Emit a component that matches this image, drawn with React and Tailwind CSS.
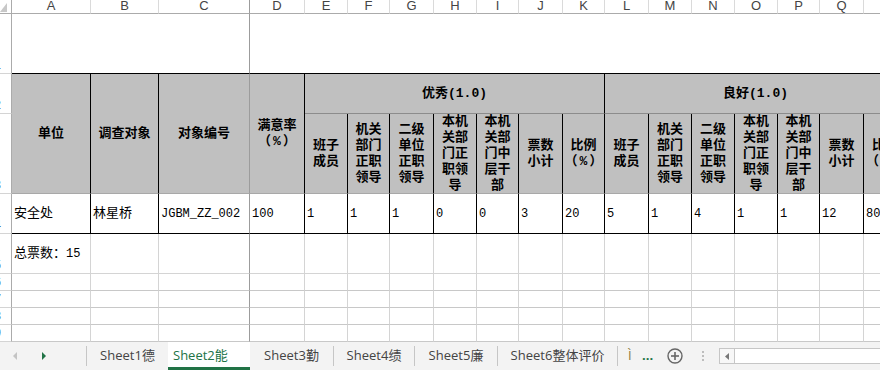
import React from 'react';

const LETTERS = ['A','B','C','D','E','F','G','H','I','J','K','L','M','N','O','P','Q','R'];

const SUB = [
  ['班子','成员'],
  ['机关','部门','正职','领导'],
  ['二级','单位','正职','领导'],
  ['本机','关部','门正','职领','导'],
  ['本机','关部','门中','层干','部'],
  ['票数','小计'],
  ['比例','（%）'],
];

const DATA = ['1','1','1','0','0','3','20','5','1','4','1','1','12','80'];

function RowHead({ n }) {
  return (
    <div className="border-r border-b border-r-[#ababab] border-b-[#d4d4d4] bg-white overflow-hidden flex items-end pb-[1px]">
      <div className="ml-[-14px] w-[23px] shrink-0 text-center text-[12px] leading-[14px] text-[#3b5c8f] font-['Liberation_Sans',sans-serif]">{n}</div>
    </div>
  );
}

export default function App() {
  return (
    <div className="w-[880px] h-[370px] overflow-hidden bg-white flex flex-col">
      <div className="grid grid-cols-[12px_79px_68px_91px_55px_43px_42px_44px_43px_42px_44px_42px_44px_43px_43px_43px_42px_44px_43px] grid-rows-[14px_60px_40px_80px_40px_40px_17px_17px_17px_17px] w-[907px] font-['Liberation_Mono','Noto_Sans_CJK_SC',monospace] text-[13px] text-black">
        {/* column header row */}
        <div className="border-r border-b border-r-[#ababab] border-b-[#ababab] bg-white relative overflow-hidden">
          <svg className="absolute left-0 top-[2px]" width="8" height="11" viewBox="0 0 8 11">
            <polygon points="7,1 7,10 0,10" fill="#c8c8c8" />
          </svg>
        </div>
        {LETTERS.map((l, i) => (
          <div
            key={l}
            className={
              i === 2
                ? "border-r border-b border-r-[#9c9c9c] border-b-[#ababab] overflow-hidden flex items-end justify-center pb-[1px]"
                : "border-r border-b border-r-[#dadada] border-b-[#ababab] overflow-hidden flex items-end justify-center pb-[1px]"
            }
          >
            <span className="font-['Liberation_Sans',sans-serif] text-[13px] leading-[13px] text-[#444]">{l}</span>
          </div>
        ))}

        {/* row 1 */}
        <RowHead n="1" />
        <div className="col-span-3 border-r border-b border-r-[#9c9c9c] border-b-black" />
        <div className="col-span-15 border-b border-b-black" />

        {/* rows 2-3 header */}
        <RowHead n="2" />
        <div className="row-span-2 bg-[#c0c0c0] border-r border-b border-r-black border-b-[#a8a8a8] flex items-center justify-center font-bold">单位</div>
        <div className="row-span-2 bg-[#c0c0c0] border-r border-b border-r-black border-b-[#a8a8a8] flex items-center justify-center font-bold">调查对象</div>
        <div className="row-span-2 bg-[#c0c0c0] border-r border-b border-r-[#9c9c9c] border-b-[#a8a8a8] flex items-center justify-center font-bold">对象编号</div>
        <div className="row-span-2 bg-[#c0c0c0] border-r border-b border-r-black border-b-[#a8a8a8] flex flex-col items-center justify-center font-bold leading-[16px]">
          <span>满意率</span>
          <span className="tracking-[2px] pl-[2px]">（%）</span>
        </div>
        <div className="col-span-7 bg-[#c0c0c0] border-r border-b border-r-black border-b-[#8c8c8c] flex items-center justify-center font-bold">优秀(1.0)</div>
        <div className="col-span-7 bg-[#c0c0c0] border-r border-b border-r-black border-b-[#8c8c8c] flex items-center justify-center font-bold">良好(1.0)</div>

        <RowHead n="3" />
        {[...SUB, ...SUB].map((lines, i) => (
          <div key={i} className="bg-[#c0c0c0] border-r border-b border-r-black border-b-[#a8a8a8] flex flex-col items-center justify-center font-bold leading-[16px] whitespace-nowrap">
            {lines.map((t, j) => (
              <span key={j} className={t === '（%）' ? "tracking-[2px] pl-[2px]" : ""}>{t}</span>
            ))}
          </div>
        ))}

        {/* row 4 data */}
        <RowHead n="4" />
        <div className="border-r border-b border-r-black border-b-black flex items-center pl-[2px]">安全处</div>
        <div className="border-r border-b border-r-black border-b-black flex items-center pl-[2px]">林星桥</div>
        <div className="border-r border-b border-r-[#9c9c9c] border-b-black flex items-center pl-[2px] text-[12px]">JGBM_ZZ_002</div>
        <div className="border-r border-b border-r-black border-b-black flex items-center pl-[2px] text-[12px]">100</div>
        {DATA.map((d, i) => (
          <div key={i} className="border-r border-b border-r-black border-b-black flex items-center pl-[2px] text-[12px]">{d}</div>
        ))}

        {/* row 5 */}
        <RowHead n="5" />
        <div className="border-r border-b border-r-[#d4d4d4] border-b-[#d4d4d4] flex items-center pl-[2px] whitespace-nowrap">总票数：<span className="text-[12px]">15</span></div>
        {LETTERS.slice(1).map((l, i) => (
          <div key={l} className={i === 1 ? "border-r border-b border-r-[#9c9c9c] border-b-[#d4d4d4]" : "border-r border-b border-r-[#d4d4d4] border-b-[#d4d4d4]"} />
        ))}

        {['6','7','8','9'].map((n) => (
          <React.Fragment key={n}>
            <RowHead n={n} />
            {LETTERS.map((l, i) => (
              <div key={l} className={i === 2 ? "border-r border-b border-r-[#9c9c9c] border-b-[#c8c8c8]" : "border-r border-b border-r-[#d4d4d4] border-b-[#c8c8c8]"} />
            ))}
          </React.Fragment>
        ))}
      </div>

      {/* sheet tab bar */}
      <div className="h-[28px] flex items-stretch bg-[#f3f3f3] font-['Open_Sans','Noto_Sans_CJK_SC',sans-serif] text-[13px] text-[#444] whitespace-nowrap">
        <div className="w-[86px] flex items-center shrink-0">
          <svg className="ml-[13px]" width="5" height="8" viewBox="0 0 5 8"><polygon points="4,0 4,8 0,4" fill="#c4c4c4" /></svg>
          <svg className="ml-[24px]" width="5" height="8" viewBox="0 0 5 8"><polygon points="0,0 0,8 4,4" fill="#217346" /></svg>
        </div>
        <div className="w-px bg-[#c6c6c6] my-[4px] shrink-0" />
        <div className="w-[81px] flex items-center justify-center shrink-0">Sheet1德</div>
        <div className="w-[82px] flex items-center justify-start pl-[5px] shrink-0 bg-white text-[#217346] border-b-[3px] border-b-[#217346] pt-[3px]">Sheet2能</div>
        <div className="w-[83px] flex items-center justify-center shrink-0">Sheet3勤</div>
        <div className="w-px bg-[#c6c6c6] my-[4px] shrink-0" />
        <div className="w-[80px] flex items-center justify-center shrink-0">Sheet4绩</div>
        <div className="w-px bg-[#c6c6c6] my-[4px] shrink-0" />
        <div className="w-[82px] flex items-center justify-center shrink-0">Sheet5廉</div>
        <div className="w-px bg-[#c6c6c6] my-[4px] shrink-0" />
        <div className="w-[119px] flex items-center justify-center shrink-0">Sheet6整体评价</div>
        <div className="w-px bg-[#c6c6c6] my-[4px] shrink-0" />
        <div className="w-[22px] flex items-center shrink-0 pl-[10px] text-[#8a7a40]">Ì</div>
        <div className="w-[27px] flex items-center shrink-0 pl-[2px] text-[#217346] font-bold">...</div>
        <div className="w-[27px] flex items-center shrink-0">
          <svg width="16" height="16" viewBox="0 0 16 16">
            <circle cx="8" cy="8" r="7" fill="none" stroke="#666" strokeWidth="1.4" />
            <line x1="8" y1="4" x2="8" y2="12" stroke="#666" strokeWidth="1.6" />
            <line x1="4" y1="8" x2="12" y2="8" stroke="#666" strokeWidth="1.6" />
          </svg>
        </div>
        <div className="w-[25px] flex flex-col items-start pl-[8px] justify-center gap-[2px] shrink-0">
          <div className="w-[2px] h-[2px] bg-[#bdbdbd]" />
          <div className="w-[2px] h-[2px] bg-[#bdbdbd]" />
          <div className="w-[2px] h-[2px] bg-[#bdbdbd]" />
        </div>
        <div className="flex-1 flex items-center">
          <div className="h-[16px] w-[16px] border border-[#c6c6c6] bg-[#f7f7f7] flex items-center justify-center shrink-0">
            <svg width="4" height="7" viewBox="0 0 4 7"><polygon points="4,0 4,7 0,3.5" fill="#777" /></svg>
          </div>
          <div className="h-[16px] flex-1 border-t border-b border-[#c6c6c6] bg-white" />
        </div>
      </div>
    </div>
  );
}
